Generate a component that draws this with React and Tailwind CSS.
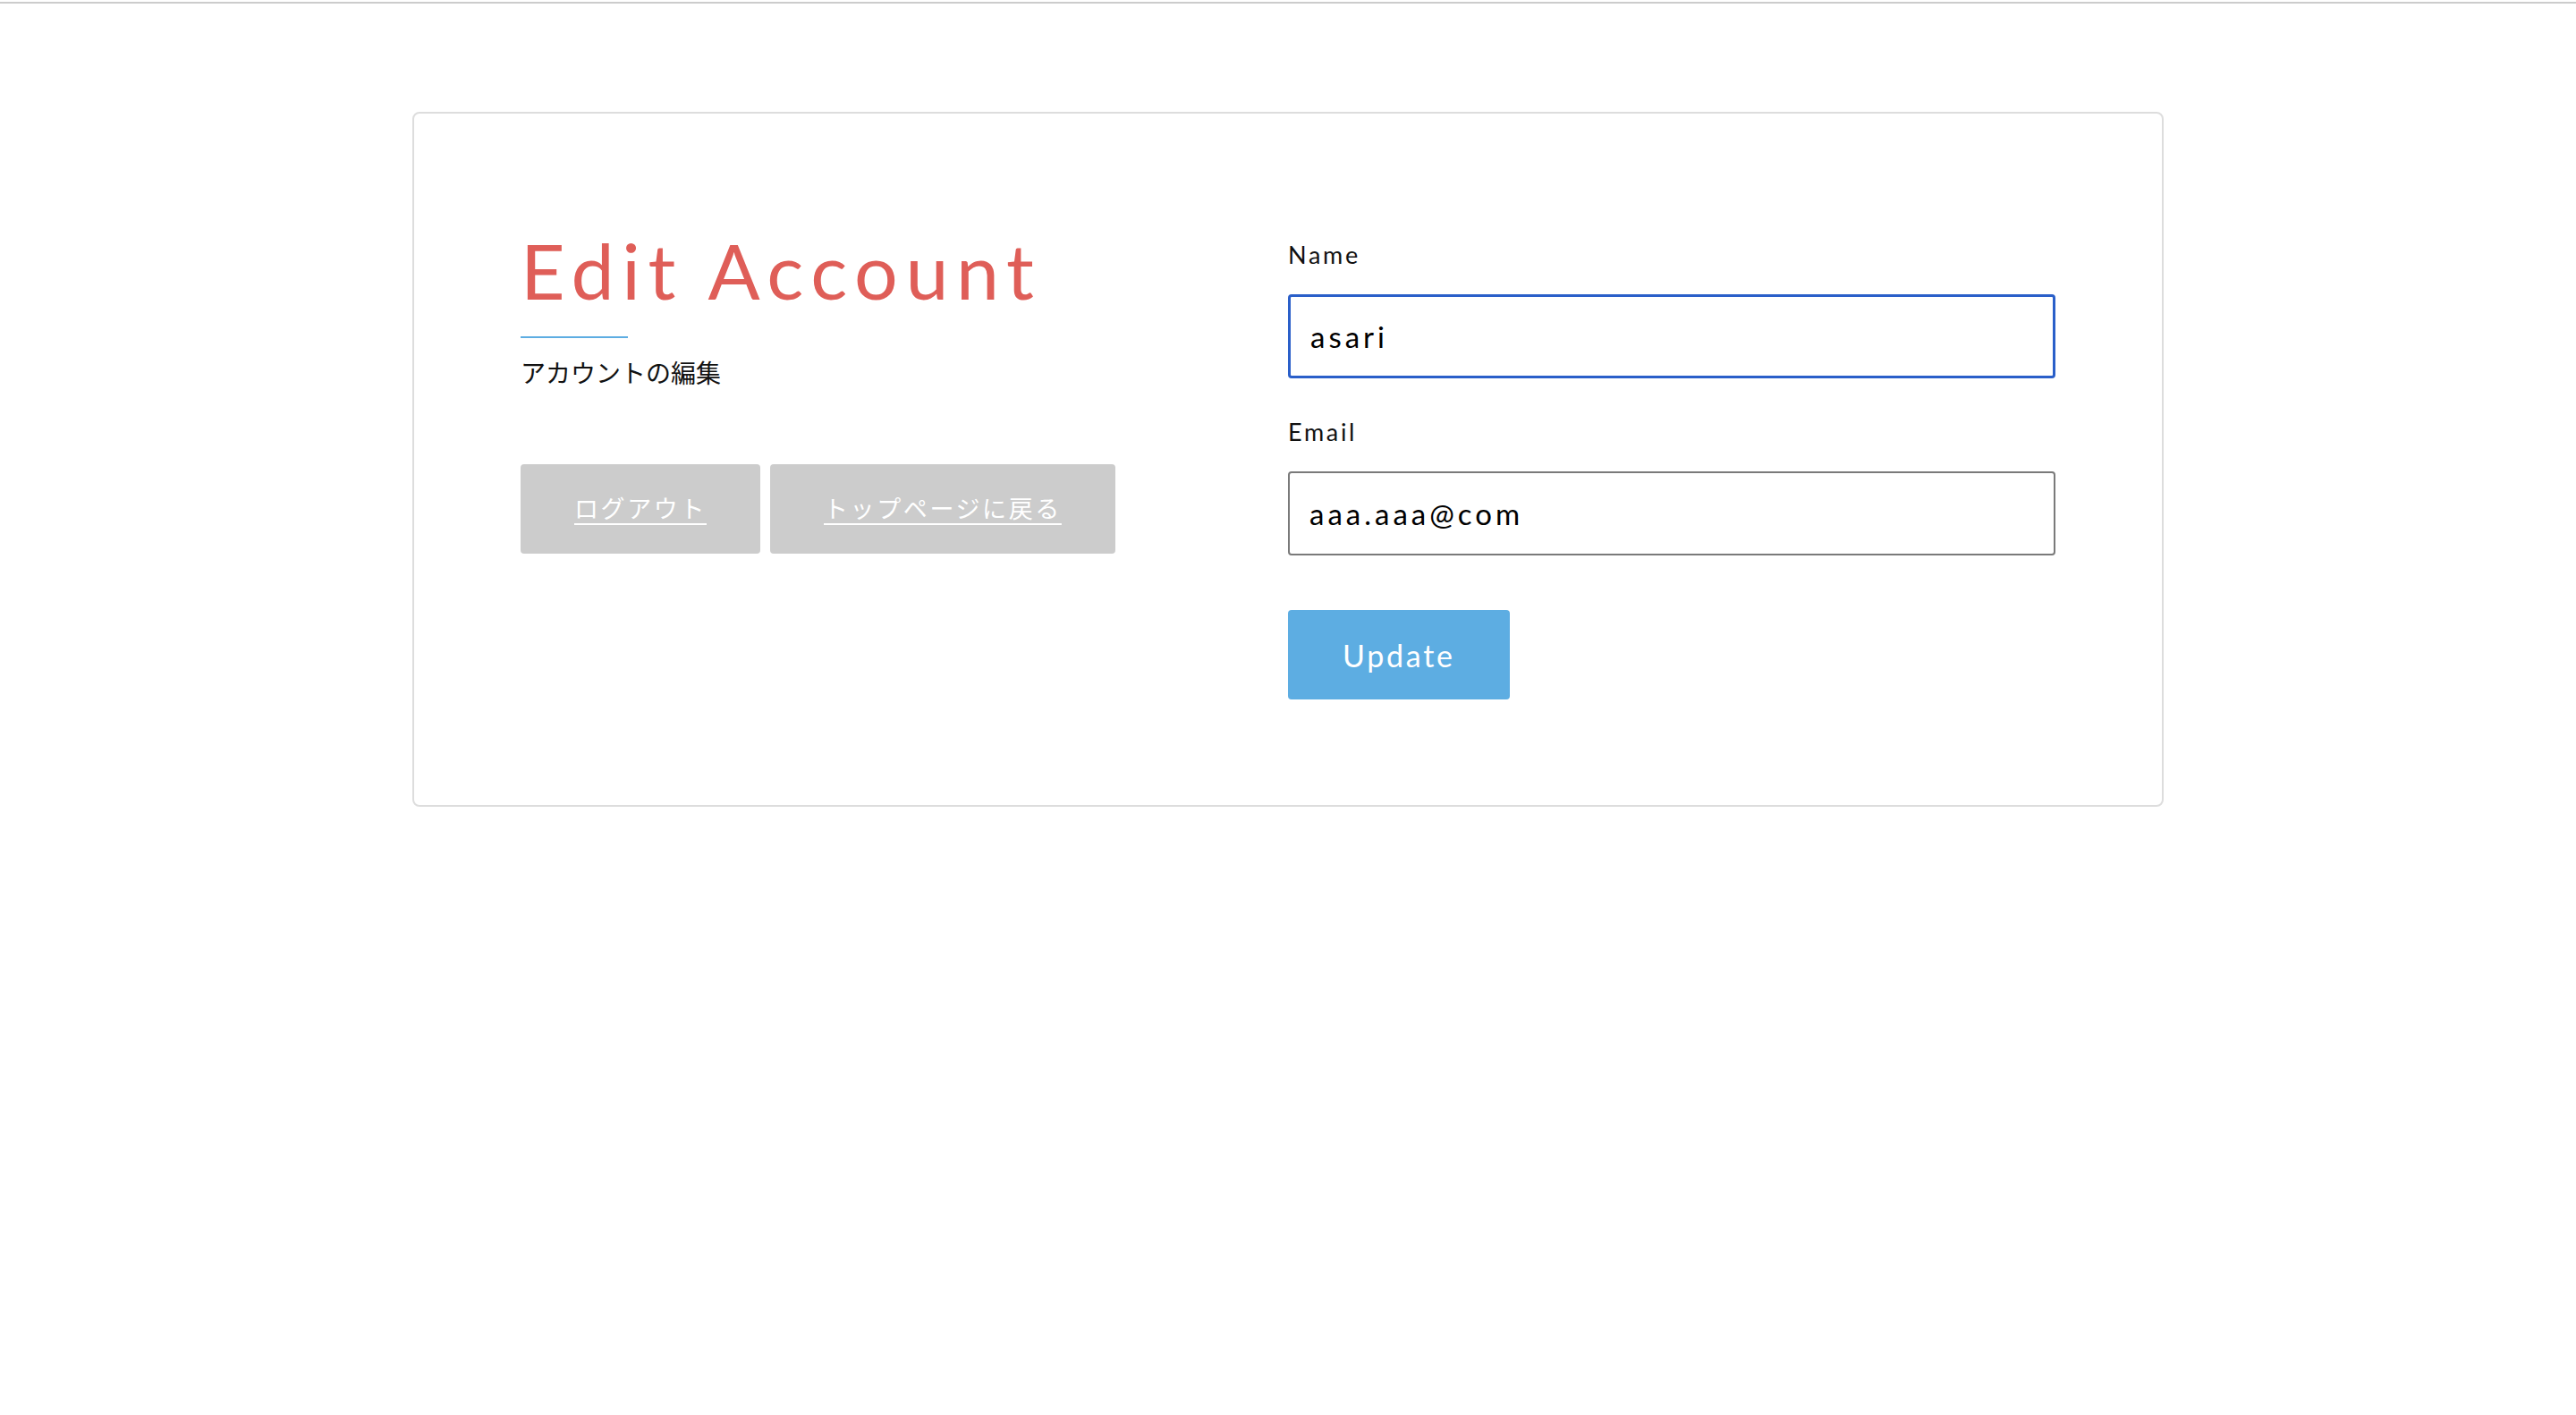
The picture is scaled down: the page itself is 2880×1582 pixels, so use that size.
import React from 'react';

// Edit Account page: card with title block on the left and the form on the right

const FONT = "font-['Lato','Noto_Sans_CJK_JP',sans-serif]";

const Field = ({ label, value, focused, className = '' }) => (
    <div className={className}>
        <label className="block text-[27px] leading-none tracking-[0.1em] text-[#111]">
            {label}
        </label>
        <input
            type="text"
            defaultValue={value}
            className={
                'mt-[31px] block h-[94px] w-full rounded-[4px] bg-white px-[22px] text-[33px] tracking-[4px] text-black outline-none ' +
                (focused ? 'border-[3px] border-[#2a5fc9]' : 'border-2 border-[#7a7a7a]')
            }
        />
    </div>
);

const App = () => {
    return (
        <div className={`min-h-screen bg-white ${FONT}`}>
            {/* top rule */}
            <div className="mt-[2px] h-[2px] bg-[#cccccc]" />

            <div className="mx-auto mt-[121px] w-[1958px] rounded-[8px] border-2 border-[#dddddd] px-[119px] pt-[132px] pb-[118px]">
                <div className="grid grid-cols-2">
                    {/* Left: heading + links */}
                    <div>
                        <h1 className="text-[86px] leading-none font-normal tracking-[0.1em] text-[#df5e58]">
                            Edit Account
                        </h1>
                        <div className="mt-[31px] h-[2px] w-[120px] bg-[#5dade2]" />
                        <p className="mt-[25px] text-[28px] leading-none text-[#111]">
                            アカウントの編集
                        </p>
                        <div className="mt-[88px] flex gap-[11px]">
                            <a
                                href="#"
                                className="flex h-[100px] items-center rounded-[4px] bg-[#cccccc] px-[60px] text-[27px] tracking-[2.6px] text-white underline underline-offset-[6px]"
                            >
                                ログアウト
                            </a>
                            <a
                                href="#"
                                className="flex h-[100px] items-center rounded-[4px] bg-[#cccccc] px-[60px] text-[27px] tracking-[2.6px] text-white underline underline-offset-[6px]"
                            >
                                トップページに戻る
                            </a>
                        </div>
                    </div>

                    {/* Right: form */}
                    <form className="pt-[12px]" onSubmit={(e) => e.preventDefault()}>
                        <Field label="Name" value="asari" focused />
                        <Field label="Email" value="aaa.aaa@com" className="mt-[46px]" />
                        <button
                            type="submit"
                            className="mt-[61px] flex h-[100px] items-center rounded-[4px] bg-[#5dade2] px-[61px] text-[34px] tracking-[0.08em] text-white"
                        >
                            Update
                        </button>
                    </form>
                </div>
            </div>
        </div>
    );
};

export default App;
